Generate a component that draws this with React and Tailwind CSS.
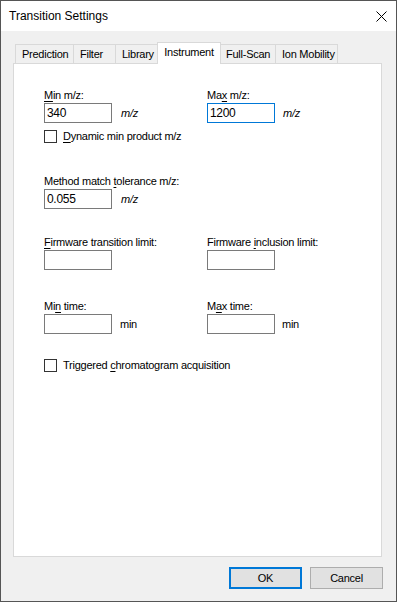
import React from "react";

const font = { fontFamily: '"Liberation Sans", Arial, sans-serif' };

function U({ children }) {
  return <span className="underline underline-offset-[2px]">{children}</span>;
}

function Label({ children }) {
  return <div className="h-[16px] leading-[16px] whitespace-nowrap">{children}</div>;
}

function Box({ value = "", focused = false }) {
  return (
    <input
      readOnly
      value={value}
      className={
        "w-[68px] h-[20px] px-[2px] bg-white outline-none text-[12px] tracking-[-0.3px] text-black " +
        (focused ? "border border-[#0078d7]" : "border border-[#7a7a7a]")
      }
    />
  );
}

function Check({ children }) {
  return (
    <div className="flex items-center h-[13px]">
      <div className="w-[13px] h-[13px] border border-[#333333] bg-white" />
      <div className="ml-[6px] whitespace-nowrap leading-[13px]">{children}</div>
    </div>
  );
}

const tabs = [
  { name: "Prediction", w: "w-[58px]" },
  { name: "Filter", w: "w-[42px]" },
  { name: "Library", w: "w-[44px]" },
  { name: "Instrument", w: "w-[64px]", active: true },
  { name: "Full-Scan", w: "w-[56px]" },
  { name: "Ion Mobility", w: "w-[63px]" },
];

export default function App() {
  return (
    <div
      style={font}
      className="w-[397px] h-[602px] border border-[#555555] bg-[#f0f0f0] flex flex-col text-[11px] tracking-[-0.25px] text-black"
    >
      {/* Title bar */}
      <div className="h-[30px] bg-white flex items-center justify-between pl-[8px] pr-[9px]">
        <div className="text-[12px] tracking-normal">Transition Settings</div>
        <svg width="11" height="11" viewBox="0 0 11 11" className="mt-[1px]">
          <path d="M0.5 0.5 L10.5 10.5 M10.5 0.5 L0.5 10.5" stroke="#000" strokeWidth="1" />
        </svg>
      </div>

      <div className="flex flex-col pl-[12px] mt-[11px]">
        {/* Tabs */}
        <div className="flex items-end h-[21px] pl-[2px]">
          {tabs.map((t) =>
            t.active ? (
              <div
                key={t.name}
                className="relative z-10 -mx-[2px] -mb-px w-[64px] h-[22px] bg-white border border-b-0 border-[#d9d9d9] flex items-start justify-center pt-[2px] leading-[15px]"
              >
                {t.name}
              </div>
            ) : (
              <div
                key={t.name}
                className={
                  t.w +
                  " h-[19px] border border-b-0 border-r-0 last:border-r border-[#d9d9d9] flex items-center pl-[6px] leading-[15px]"
                }
              >
                {t.name}
              </div>
            )
          )}
        </div>

        {/* Panel */}
        <div className="w-[369px] h-[494px] bg-white border border-[#d9d9d9] pl-[30px] pt-[23px] flex flex-col">
          <div className="flex">
            <div className="w-[163px]">
              <Label>
                <U>M</U>in m/z:
              </Label>
              <div className="flex items-center">
                <Box value="340" />
                <span className="ml-[9px] italic">m/z</span>
              </div>
            </div>
            <div>
              <Label>
                Ma<U>x</U> m/z:
              </Label>
              <div className="flex items-center">
                <Box value="1200" focused />
                <span className="ml-[8px] italic">m/z</span>
              </div>
            </div>
          </div>

          <div className="mt-[7px]">
            <Check>
              <U>D</U>ynamic min product m/z
            </Check>
          </div>

          <div className="mt-[30px]">
            <Label>
              Method match <U>t</U>olerance m/z:
            </Label>
            <div className="flex items-center">
              <Box value="0.055" />
              <span className="ml-[9px] italic">m/z</span>
            </div>
          </div>

          <div className="flex mt-[25px]">
            <div className="w-[163px]">
              <Label>
                <U>F</U>irmware transition limit:
              </Label>
              <Box />
            </div>
            <div>
              <Label>
                Firmware <U>i</U>nclusion limit:
              </Label>
              <Box />
            </div>
          </div>

          <div className="flex mt-[28px]">
            <div className="w-[163px]">
              <Label>
                Mi<U>n</U> time:
              </Label>
              <div className="flex items-center">
                <Box />
                <span className="ml-[8px]">min</span>
              </div>
            </div>
            <div>
              <Label>
                M<U>a</U>x time:
              </Label>
              <div className="flex items-center">
                <Box />
                <span className="ml-[7px]">min</span>
              </div>
            </div>
          </div>

          <div className="mt-[25px]">
            <Check>
              Triggered <U>c</U>hromatogram acquisition
            </Check>
          </div>
        </div>

        {/* Buttons */}
        <div className="flex justify-end gap-[8px] pr-[13px] mt-[10px]">
          <button className="w-[73px] h-[22px] bg-[#e1e1e1] border-2 border-[#0078d7] text-[11px]">
            OK
          </button>
          <button className="w-[73px] h-[22px] bg-[#e1e1e1] border border-[#adadad] text-[11px]">
            Cancel
          </button>
        </div>
      </div>
    </div>
  );
}
